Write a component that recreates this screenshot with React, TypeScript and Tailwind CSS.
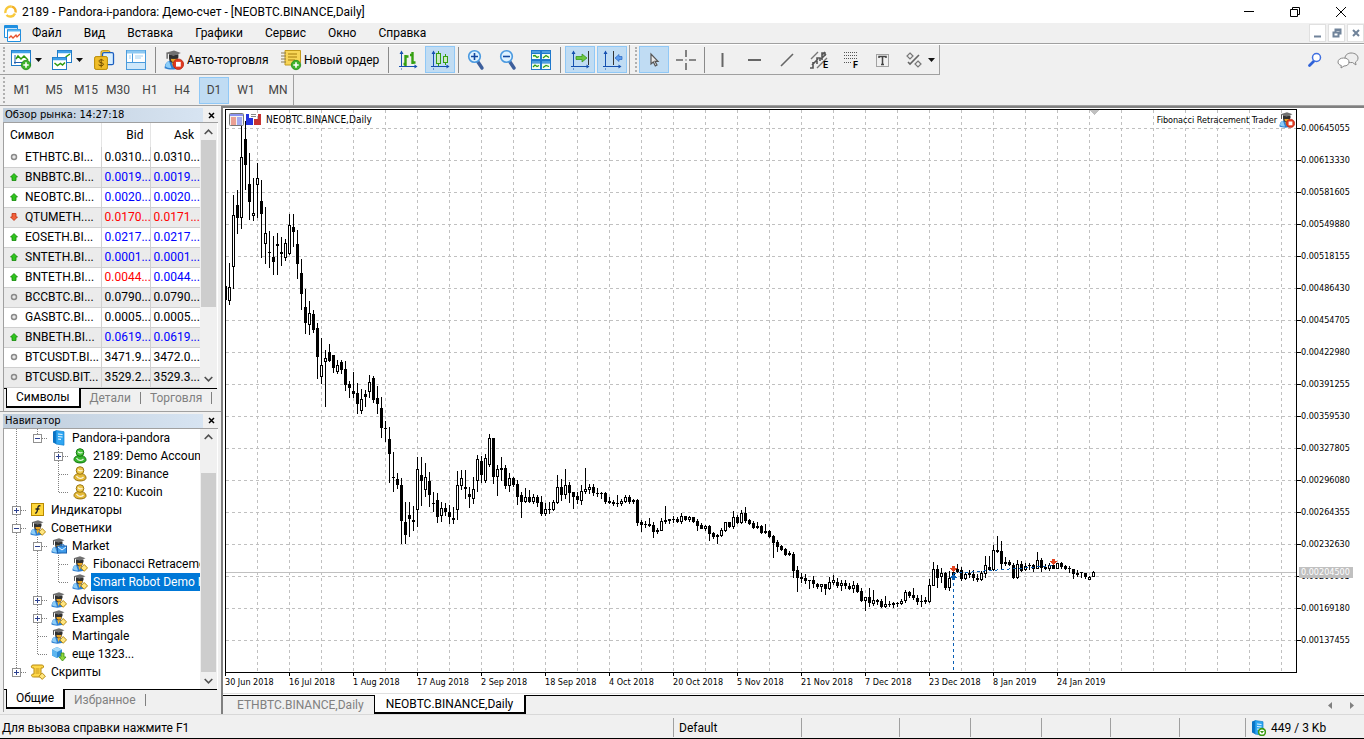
import React from "react";
import clsx from "clsx";

// [high, low, body top, body bottom, hollow]
type Candle = [number, number, number, number, number];

const candles: Candle[] = [
  [286, 300, 286, 300, 0], [263, 305, 287, 301, 1], [195, 289, 215, 267, 1], [190, 234, 205, 218, 0],
  [125, 229, 157, 218, 1], [121, 190, 139, 165, 0], [153, 220, 184, 202, 0], [178, 221, 213, 216, 1],
  [163, 218, 178, 185, 1], [180, 258, 201, 214, 0], [207, 264, 233, 244, 1], [231, 268, 252, 253, 0],
  [236, 275, 257, 262, 0], [233, 275, 244, 246, 0], [237, 266, 252, 254, 0], [239, 261, 243, 258, 1],
  [214, 255, 225, 254, 1], [214, 247, 227, 232, 0], [230, 279, 244, 264, 0], [259, 310, 273, 294, 0],
  [289, 334, 307, 323, 0], [301, 335, 313, 325, 1], [310, 333, 314, 330, 0], [323, 379, 328, 357, 0],
  [338, 384, 365, 377, 1], [350, 407, 358, 362, 1], [344, 362, 352, 361, 0], [355, 373, 355, 368, 0],
  [360, 374, 365, 372, 1], [360, 374, 362, 370, 0], [361, 391, 369, 385, 0], [381, 398, 384, 388, 0],
  [372, 398, 391, 394, 0], [383, 414, 393, 404, 0], [389, 414, 399, 411, 1], [390, 407, 394, 397, 0],
  [375, 398, 382, 392, 1], [376, 403, 378, 400, 0], [386, 414, 398, 404, 0], [397, 438, 408, 428, 0],
  [421, 442, 428, 429, 0], [427, 483, 439, 454, 0], [452, 492, 477, 478, 0], [473, 489, 479, 485, 0],
  [478, 544, 485, 521, 0], [502, 544, 522, 535, 0], [502, 537, 515, 519, 0], [506, 531, 520, 522, 0],
  [457, 527, 469, 510, 1], [457, 506, 475, 481, 0], [463, 497, 477, 490, 1], [472, 507, 481, 495, 0],
  [492, 512, 503, 504, 0], [493, 523, 500, 517, 0], [502, 522, 508, 516, 1], [503, 516, 508, 512, 0],
  [505, 524, 512, 517, 0], [507, 524, 518, 520, 0], [471, 520, 485, 510, 1], [470, 490, 478, 486, 1],
  [470, 499, 487, 489, 0], [487, 508, 494, 497, 0], [477, 504, 489, 499, 1], [455, 492, 459, 481, 1],
  [456, 483, 461, 475, 0], [454, 483, 458, 481, 1], [434, 467, 438, 465, 1], [438, 484, 438, 477, 0],
  [465, 496, 469, 477, 1], [457, 481, 468, 470, 0], [465, 489, 468, 486, 0], [473, 492, 478, 486, 1],
  [477, 487, 478, 485, 0], [480, 505, 484, 497, 0], [492, 518, 495, 502, 0], [488, 503, 497, 502, 1],
  [490, 503, 497, 502, 0], [494, 504, 497, 502, 1], [495, 507, 497, 503, 0], [496, 516, 502, 514, 0],
  [503, 516, 509, 514, 1], [502, 514, 509, 510, 0], [500, 511, 502, 510, 1], [475, 504, 487, 503, 1],
  [479, 501, 487, 495, 0], [469, 499, 485, 495, 1], [482, 503, 485, 493, 0], [492, 509, 492, 497, 0],
  [492, 504, 496, 500, 0], [485, 505, 491, 501, 1], [468, 494, 489, 492, 1], [484, 494, 487, 490, 1],
  [484, 496, 487, 493, 0], [488, 497, 493, 494, 0], [492, 499, 493, 494, 0], [492, 504, 493, 502, 0],
  [497, 504, 501, 503, 0], [500, 506, 502, 504, 0], [495, 507, 503, 504, 0], [499, 506, 501, 504, 1],
  [495, 503, 497, 502, 1], [495, 504, 497, 502, 0], [499, 504, 500, 502, 0], [499, 526, 500, 523, 0],
  [520, 532, 522, 525, 0], [521, 528, 524, 525, 0], [518, 527, 524, 526, 0], [522, 538, 525, 532, 0],
  [528, 534, 530, 532, 0], [518, 531, 521, 531, 1], [506, 524, 520, 522, 0], [519, 524, 519, 521, 0],
  [516, 523, 519, 520, 0], [517, 523, 519, 522, 0], [513, 524, 516, 522, 1], [516, 521, 516, 520, 0],
  [516, 522, 517, 520, 1], [517, 523, 517, 522, 0], [519, 531, 521, 526, 0], [523, 529, 525, 529, 0],
  [525, 531, 526, 529, 1], [525, 541, 526, 534, 0], [532, 539, 533, 537, 0], [534, 544, 535, 537, 0],
  [528, 537, 530, 536, 1], [522, 532, 522, 531, 1], [522, 528, 522, 527, 0], [511, 529, 517, 527, 1],
  [515, 524, 517, 523, 0], [510, 524, 513, 523, 1], [507, 523, 513, 521, 0], [519, 525, 520, 524, 0],
  [521, 529, 523, 528, 0], [522, 529, 526, 528, 0], [525, 534, 526, 533, 0], [524, 534, 531, 533, 0],
  [530, 538, 531, 537, 0], [535, 558, 536, 543, 0], [540, 552, 542, 547, 0], [545, 551, 546, 550, 0],
  [548, 556, 549, 555, 0], [551, 556, 553, 555, 0], [552, 578, 554, 571, 0], [566, 592, 570, 578, 0],
  [573, 583, 577, 579, 0], [574, 584, 578, 581, 0], [580, 589, 580, 581, 0], [576, 588, 580, 584, 0],
  [583, 589, 584, 587, 0], [584, 592, 584, 587, 1], [584, 595, 584, 589, 0], [577, 590, 582, 589, 1],
  [575, 585, 580, 583, 1], [578, 588, 582, 586, 0], [580, 591, 583, 586, 1], [580, 589, 583, 586, 0],
  [583, 590, 586, 589, 0], [581, 593, 585, 589, 1], [583, 593, 585, 592, 0], [588, 602, 591, 601, 0],
  [597, 611, 597, 601, 1], [588, 607, 597, 603, 0], [590, 606, 600, 604, 1], [599, 605, 600, 602, 0],
  [599, 608, 601, 607, 0], [596, 608, 604, 607, 1], [601, 607, 604, 605, 0], [602, 608, 603, 605, 0],
  [602, 607, 603, 604, 0], [599, 605, 601, 604, 1], [590, 603, 592, 601, 1], [591, 598, 592, 596, 0],
  [588, 600, 595, 598, 0], [595, 605, 598, 602, 0], [595, 607, 601, 602, 0], [597, 604, 600, 602, 0],
  [579, 603, 585, 602, 1], [562, 586, 569, 586, 1], [565, 588, 569, 578, 0], [568, 583, 573, 577, 1],
  [572, 590, 573, 588, 0], [571, 591, 578, 588, 1], [571, 580, 572, 575, 0], [564, 573, 569, 572, 0],
  [567, 581, 570, 579, 0], [572, 580, 574, 579, 1], [570, 578, 573, 575, 0], [570, 581, 574, 578, 0],
  [574, 582, 578, 580, 0], [571, 581, 573, 580, 1], [556, 578, 565, 574, 1], [556, 571, 567, 570, 0],
  [545, 571, 550, 570, 1], [536, 553, 550, 552, 0], [541, 569, 551, 564, 0], [557, 566, 562, 564, 0],
  [560, 566, 562, 565, 0], [563, 579, 565, 578, 0], [560, 579, 564, 578, 1], [561, 572, 564, 571, 0],
  [563, 571, 566, 570, 1], [563, 570, 565, 566, 0], [564, 572, 565, 569, 0], [552, 569, 560, 569, 1],
  [558, 572, 560, 568, 0], [564, 570, 567, 569, 0], [563, 571, 565, 569, 1], [564, 569, 565, 569, 0],
  [563, 569, 563, 569, 1], [562, 569, 563, 567, 0], [565, 570, 566, 569, 0], [566, 573, 568, 569, 0],
  [569, 579, 569, 574, 0], [570, 577, 573, 575, 0], [572, 578, 572, 573, 0], [573, 579, 573, 577, 0],
  [576, 580, 577, 580, 1], [571, 577, 572, 577, 1],
];

const prices = [
  "0.00645055", "0.00613330", "0.00581605", "0.00549880", "0.00518155", "0.00486430",
  "0.00454705", "0.00422980", "0.00391255", "0.00359530", "0.00327805", "0.00296080",
  "0.00264355", "0.00232630", "0.00200905", "0.00169180", "0.00137455",
];

const dates = [
  "30 Jun 2018", "16 Jul 2018", "1 Aug 2018", "17 Aug 2018", "2 Sep 2018", "18 Sep 2018", "4 Oct 2018",
  "20 Oct 2018", "5 Nov 2018", "21 Nov 2018", "7 Dec 2018", "23 Dec 2018", "8 Jan 2019", "24 Jan 2019",
];

type Dir = "up" | "down" | "flat";
const quotes: { symbol: string; bid: string; ask: string; dir: Dir; bidUp?: boolean }[] = [
  { symbol: "ETHBTC.BI...", bid: "0.0310...", ask: "0.0310...", dir: "flat" },
  { symbol: "BNBBTC.BI...", bid: "0.0019...", ask: "0.0019...", dir: "up" },
  { symbol: "NEOBTC.BI...", bid: "0.0020...", ask: "0.0020...", dir: "up" },
  { symbol: "QTUMETH....", bid: "0.0170...", ask: "0.0171...", dir: "down" },
  { symbol: "EOSETH.BI...", bid: "0.0217...", ask: "0.0217...", dir: "up" },
  { symbol: "SNTETH.BI...", bid: "0.0001...", ask: "0.0001...", dir: "up" },
  { symbol: "BNTETH.BI...", bid: "0.0044...", ask: "0.0044...", dir: "up", bidUp: false },
  { symbol: "BCCBTC.BI...", bid: "0.0790...", ask: "0.0790...", dir: "flat" },
  { symbol: "GASBTC.BI...", bid: "0.0005...", ask: "0.0005...", dir: "flat" },
  { symbol: "BNBETH.BI...", bid: "0.0619...", ask: "0.0619...", dir: "up" },
  { symbol: "BTCUSDT.BI...", bid: "3471.9...", ask: "3472.0...", dir: "flat" },
  { symbol: "BTCUSD.BIT...", bid: "3529.2...", ask: "3529.3...", dir: "flat" },
];

const dirColor: Record<Dir, string> = {
  up: "text-[#0000ff]",
  down: "text-[#ff0000]",
  flat: "text-black",
};

// cells: "|" line, "T" branch, "L" last branch, "+"/"-" box, "p"/"m" box on the last branch
const tree: { cells: string; icon: string; label: string; selected?: boolean }[] = [
  { cells: "|m", icon: "server", label: "Pandora-i-pandora" },
  { cells: "| +", icon: "userGreen", label: "2189: Demo Account" },
  { cells: "| T", icon: "userGold", label: "2209: Binance" },
  { cells: "| L", icon: "userGold", label: "2210: Kucoin" },
  { cells: "+", icon: "indicator", label: "Индикаторы" },
  { cells: "-", icon: "expert", label: "Советники" },
  { cells: "|-", icon: "market", label: "Market" },
  { cells: "||T", icon: "expert", label: "Fibonacci Retracement" },
  { cells: "||L", icon: "expert", label: "Smart Robot Demo M", selected: true },
  { cells: "|+", icon: "expert", label: "Advisors" },
  { cells: "|+", icon: "expert", label: "Examples" },
  { cells: "|T", icon: "expert", label: "Martingale" },
  { cells: "|L", icon: "more", label: "еще 1323..." },
  { cells: "p", icon: "script", label: "Скрипты" },
];

const Expert = ({ badge = "diamond", size = 16 }: { badge?: string; size?: number }) => (
  <svg width={size} height={size} viewBox="0 0 16 16" aria-hidden="true">
    <path d="M.5 14.500c0-4 2-6 5.500-6s5.500 2 6 6c-3 1.500-8.500 1.500-11.500 0z" fill="#2f7fd0" />
    <path d="M1 13c.3-2.500 1.500-3.800 3-4l2 5.500c-2 0-4.300-.4-5-1.500z" fill="#8ccdf8" />
    <path d="M6 9l1.500 5L10 9z" fill="#f4b52c" />
    <path d="M4 3.500h7v3.200c0 2.300-1.500 3.500-3.500 3.500S4 9 4 6.700z" fill="#3a3a3a" />
    <path d="M5.500 7h5c0 1.800-1 2.700-2.500 2.700S5.500 8.800 5.500 7z" fill="#e9a423" />
    <path d="M1.500 2.200L8 .3l5.500 2L7.500 4.700z" fill="#707070" />
    <path d="M4 3.600l3.500 1.300 4-1.500v2.800c-2 1-5.500 1-7.500 0z" fill="#303030" />
    <path d="M2.500 2.400v4.500" stroke="#555" strokeWidth="1" />
    {badge === "diamond" && (
      <path d="M12.200 8.500l3.300 3.400-3.300 3.400-3.300-3.400z" fill="#ffe680" stroke="#b78a10" strokeWidth="1" />
    )}
    {badge === "stop" && (
      <>
        <circle cx="11.500" cy="11.400" r="4.200" fill="#e03a20" stroke="#b32010" strokeWidth=".6" />
        <rect x="9.600" y="9.500" width="3.800" height="3.800" fill="#fff" />
      </>
    )}
    {badge === "case" && (
      <>
        <path d="M9 8V6.800h4V8" fill="none" stroke="#1f6fc0" />
        <rect x="6.500" y="8" width="9" height="7" fill="#3f9bea" stroke="#1b60ad" />
        <path d="M7 9l4 3 4-3" fill="none" stroke="#e8f5ff" />
      </>
    )}
  </svg>
);

const Coin = ({ green }: { green?: boolean }) => (
  <svg width="16" height="16" viewBox="0 0 16 16" aria-hidden="true">
    <path
      d="M2 11.500C2 9 4.500 7.500 8 7.500s6 1.500 6 4.500c0 4-12 4-12-.5z"
      fill={green ? "#37b52c" : "#e3b935"}
      stroke={green ? "#12780f" : "#9b7410"}
    />
    <circle cx="8" cy="4.500" r="3.800" fill={green ? "#48c53a" : "#eec94c"} stroke={green ? "#12780f" : "#9b7410"} />
    <path d="M6 3.500c1 2 3 1.500 4.500 1M4.500 10c2 3 5 3 7 1" stroke="#fff" strokeWidth="1.300" fill="none" opacity=".85" />
  </svg>
);

const Server = ({ ok }: { ok?: boolean }) => (
  <svg width="16" height="16" viewBox="0 0 16 16" aria-hidden="true">
    <path d="M2 1.500L5 .5v13.500l-3-1.500z" fill="#0a72c4" />
    <path d="M5 .5l8 1.200v13.500L5 14z" fill="#2fa6f2" stroke="#0f7fd0" strokeWidth=".7" />
    <path d="M7 4l4.500.5M7 6.500l4.500.5M7 9l3 .4" stroke="#e5f6ff" strokeWidth="1.200" />
    {ok && (
      <>
        <circle cx="12" cy="12" r="3.400" fill="#fff" stroke="#3a9a10" strokeWidth="1.600" />
        <path d="M10 11h4l-2 2.500z" fill="#3a9a10" />
      </>
    )}
  </svg>
);

const TreeIcon = ({ name }: { name: string }) => {
  if (name === "server") return <Server />;
  if (name === "userGreen") return <Coin green />;
  if (name === "userGold") return <Coin />;
  if (name === "expert") return <Expert />;
  if (name === "market") return <Expert badge="case" />;
  if (name === "indicator")
    return (
      <svg width="16" height="16" viewBox="0 0 16 16" aria-hidden="true">
        <rect x="1.500" y="1.500" width="12" height="12" fill="#ffd83d" stroke="#b98a00" />
        <path d="M10.500 4c-2-.8-2.500.5-2.800 2.500S7 11.500 5 11.200M5.500 7h4" stroke="#222" strokeWidth="1.300" fill="none" />
      </svg>
    );
  if (name === "more")
    return (
      <svg width="16" height="16" viewBox="0 0 16 16" aria-hidden="true">
        <path d="M1 3.500L6 1l5 2.500v6L6 12 1 9.500z" fill="#2c8ad4" />
        <path d="M1 3.500L6 1l5 2.500L6 6z" fill="#a9dcfb" />
        <path d="M1 3.500L6 6v6L1 9.500z" fill="#5cb5ef" />
        <path d="M10 7h3v4h2l-3.500 4L8 11h2z" fill="#8fd63c" stroke="#3a8f14" strokeWidth=".8" />
      </svg>
    );
  return (
    <svg width="16" height="16" viewBox="0 0 16 16" aria-hidden="true">
      <path d="M3 1h9c2 0 2 3 .5 3H11v9H3.500C1 13 1 10 3 10h1V4H2.500C.8 4 1 1 3 1z" fill="#ffd84a" stroke="#b78a10" />
      <path d="M5.500 5h4M5.500 7h4M5.500 9h4" stroke="#c8951a" />
      <path d="M12.200 9l3.200 3.200-3.200 3.200L9 12.200z" fill="#ffe680" stroke="#b78a10" />
    </svg>
  );
};

const TreeCell = ({ kind }: { kind: string }) => {
  const box = "+-pm".includes(kind);
  const down = "|T+-".includes(kind);
  const dots = { stroke: "#808080", strokeDasharray: "1 1" };
  return (
    <svg width="21" height="18" className="shrink-0" shapeRendering="crispEdges" aria-hidden="true">
      {kind !== " " && <path d={down ? "M10.500 0v18" : "M10.500 0v9"} {...dots} />}
      {kind !== " " && kind !== "|" && <path d="M11 9.500h10" {...dots} />}
      {box && (
        <>
          <rect x="6.500" y="5.500" width="8" height="8" fill="#fff" stroke="#919191" />
          <path d={kind === "+" || kind === "p" ? "M8 9.500h5M10.500 7v5" : "M8 9.500h5"} stroke="#2b3f8f" />
        </>
      )}
    </svg>
  );
};

const Arrow = ({ dir }: { dir: Dir }) => {
  if (dir === "flat")
    return (
      <svg width="8" height="8" aria-hidden="true">
        <circle cx="4" cy="4" r="2.500" fill="#e8e8e8" stroke="#8a8a8a" strokeWidth="1.500" />
      </svg>
    );
  return (
    <svg width="8" height="8" aria-hidden="true">
      {dir === "up" ? (
        <path d="M4 .5L7.500 4H6v3.500H2V4H.5z" fill="#2fc41c" stroke="#138a08" strokeWidth=".8" />
      ) : (
        <path d="M4 7.500L.5 4H2V.5h4V4h1.500z" fill="#f2603a" stroke="#c03010" strokeWidth=".8" />
      )}
    </svg>
  );
};

const Caret = () => (
  <svg width="7" height="4" aria-hidden="true">
    <path d="M0 0h7L3.500 4z" fill="#111" />
  </svg>
);

const Icon = ({ children }: { children: React.ReactNode }) => (
  <svg width="20" height="20" viewBox="0 0 20 20" fill="none" className="shrink-0 overflow-visible" aria-hidden="true">
    {children}
  </svg>
);

const Axes = () => (
  <g fill="#1550b0" stroke="#1550b0">
    <path d="M3.500 3v14M1 16.500h17" />
    <path d="M1.500 4L3.500.5 5.500 4zM16.500 14.500l3 2-3 2z" stroke="none" />
    <path d="M3.500 18.500v1" />
  </g>
);

const Plus = () => (
  <>
    <circle cx="15" cy="15" r="4.700" fill="#3fb32e" stroke="#1f8a14" strokeWidth=".8" />
    <path d="M12.300 15h5.400M15 12.300v5.400" stroke="#fff" strokeWidth="1.600" />
  </>
);

const icons = {
  newChart: (
    <Icon>
      <rect x=".5" y=".5" width="19" height="15" fill="#fff" stroke="#1f7bc8" />
      <path d="M1 2h18" stroke="#3fa0e8" strokeWidth="2.500" />
      <path d="M4 5v9M3 12.500h13" stroke="#1f60b0" />
      <path d="M5 9l2-3 3 3 3-3 4 4" stroke="#2e9a10" strokeWidth="1.500" />
      <Plus />
    </Icon>
  ),
  profiles: (
    <Icon>
      <rect x="5.500" y=".5" width="14" height="12" fill="#fff" stroke="#1f7bc8" />
      <path d="M6 2h13" stroke="#3fa0e8" strokeWidth="2.500" />
      <path d="M13 8l2-2 3-2" stroke="#2e9a10" strokeWidth="1.500" />
      <rect x=".5" y="7.500" width="14" height="12" fill="#fff" stroke="#1f7bc8" />
      <path d="M1 9h13" stroke="#3fa0e8" strokeWidth="2.500" />
      <path d="M2.500 13l3 2.500 3-2 2 1.500 2.500-2.500" stroke="#2e9a10" strokeWidth="1.500" />
    </Icon>
  ),
  symbols: (
    <Icon>
      <rect x="7" y=".7" width="9" height="7" rx="1.500" fill="#f6d35a" stroke="#b98a00" />
      <rect x="8.500" y="2.700" width="11" height="12" rx="1.500" fill="#d8efff" stroke="#1c5fc0" strokeWidth="1.300" />
      <rect x=".6" y="6.600" width="12.800" height="12.800" rx="1.500" fill="#f0bd28" stroke="#b98a00" />
      <path d="M9.500 10.500c-1.500-1.200-5-.8-4.500 1 .4 1.500 4.200.8 4.500 2.700.2 1.700-3.300 2-5 .6M7.200 8.800v8.700" stroke="#6f4c00" />
    </Icon>
  ),
  panels: (
    <Icon>
      <rect x=".5" y=".5" width="19" height="19" fill="#fff" stroke="#4a9bdc" />
      <path d="M1 2h18" stroke="#8cc8f2" strokeWidth="3" />
      <rect x="1" y="13" width="18" height="6" fill="#cfe8fa" />
      <path d="M6.500 3.500v9M1 12.500h18" stroke="#4a9bdc" />
      <path d="M3 6h2M3 8h2M9 6h8M9 8h6" stroke="#9fd0f2" />
    </Icon>
  ),
  order: (
    <Icon>
      <path d="M4 .5h15.500v12L17 15H4z" fill="#f8d556" stroke="#c29a1c" />
      <path d="M7 4h9M7 7h9M7 10h7" stroke="#a57c0c" />
      <path d="M0 3h5M0 6h5M0 9h5M0 12h5" stroke="#8a7a50" />
      <Plus />
    </Icon>
  ),
  bars: (
    <Icon>
      <Axes />
      <path d="M7.500 5v11M5.500 14h2M7.500 6.500h3M14.500 2v12M12 5h2.500M14.500 12.500h3" stroke="#35a011" strokeWidth="2.400" />
    </Icon>
  ),
  candles: (
    <Icon>
      <Axes />
      <path d="M8.500 1v15M15.500 4v11" stroke="#35a011" />
      <rect x="6.500" y="3.500" width="4" height="10" fill="#cdebc0" stroke="#35a011" />
      <rect x="13.500" y="6.500" width="4" height="6" fill="#cdebc0" stroke="#35a011" />
    </Icon>
  ),
  zoomIn: (
    <Icon>
      <path d="M11 12l4 6" stroke="#3d5f9c" strokeWidth="3.400" strokeLinecap="round" />
      <circle cx="7.500" cy="6.500" r="5.800" fill="#dff2ff" stroke="#4b9ae0" strokeWidth="1.600" />
      <path d="M4 6.500h7M7.500 3v7" stroke="#1348a0" strokeWidth="1.600" />
    </Icon>
  ),
  zoomOut: (
    <Icon>
      <path d="M11 12l4 6" stroke="#3d5f9c" strokeWidth="3.400" strokeLinecap="round" />
      <circle cx="7.500" cy="6.500" r="5.800" fill="#dff2ff" stroke="#4b9ae0" strokeWidth="1.600" />
      <path d="M4 6.500h7" stroke="#1348a0" strokeWidth="1.600" />
    </Icon>
  ),
  tile: (
    <Icon>
      <rect x="0" y="0" width="20" height="20" fill="#1f78cc" />
      <path d="M1 2h8M11 2h8M1 12h8M11 12h8" stroke="#7cc4f5" strokeWidth="1" />
      <path d="M1 4h8v5H1zM11 4h8v5h-8zM1 13.500h8V19H1zM11 13.500h8V19h-8z" fill="#f4fff0" />
      <path d="M2 6l2-.5 2 2 2-1M12 8l3-2.500 3 2M2 17l2-2 2 1.500 2-1M12 17.500l3-2 3 1" stroke="#2e9a10" strokeWidth="1.300" />
    </Icon>
  ),
  autoScroll: (
    <Icon>
      <Axes />
      <path d="M18.500 1v14" stroke="#333" />
      <path d="M6 6.500h6V4l5 4-5 4V9.500H6z" fill="#6cc840" stroke="#2f8f12" strokeWidth=".7" />
    </Icon>
  ),
  shift: (
    <Icon>
      <Axes />
      <path d="M11.500 1v14" stroke="#333" />
      <path d="M20 6.500h-3V4.500L13 8l4 3.500v-2h3z" fill="#5b9bee" stroke="#2a64c0" strokeWidth=".7" />
    </Icon>
  ),
  cursor: (
    <Icon>
      <path d="M7 4v10l2.300-2 2 4 1.700-1-2-3.700h3z" fill="#e8e8e8" stroke="#555" strokeWidth="1.200" />
    </Icon>
  ),
  cross: (
    <Icon>
      <path d="M10 0v7M10 13v7M0 10h7M13 10h7M9.500 10h1" stroke="#666" strokeWidth="1.600" />
    </Icon>
  ),
  vline: (
    <Icon>
      <path d="M9.500 3v14" stroke="#666" strokeWidth="2" />
    </Icon>
  ),
  hline: (
    <Icon>
      <path d="M3 10h13" stroke="#666" strokeWidth="2" />
    </Icon>
  ),
  trend: (
    <Icon>
      <path d="M4 16L16 4" stroke="#666" strokeWidth="1.600" />
    </Icon>
  ),
  channel: (
    <Icon>
      <path d="M2 9l7-7M8 18L18 8" stroke="#777" strokeWidth="1.400" />
      <path d="M1 18h3v-6M3 15l6-6M8 14V8h3v3M13 10V3h3v3M13 5l3-3M12 9l5-5" stroke="#555" strokeWidth="1.600" />
      <text x="14" y="18" fill="#000" fontSize="9" fontWeight="700" stroke="none">E</text>
    </Icon>
  ),
  fibo: (
    <Icon>
      <path d="M3 2.500h14M3 5.500h14M3 8.500h14M3 12.500h8" stroke="#555" strokeDasharray="1 1" />
      <text x="12" y="18" fill="#000" fontSize="9" fontWeight="700" stroke="none">F</text>
    </Icon>
  ),
  label: (
    <Icon>
      <rect x="3.500" y="4.500" width="12" height="12" stroke="#555" strokeDasharray="1 1" />
      <path d="M6 8V6.500h7V8M9.500 6.500v8M8 14.500h3" stroke="#444" strokeWidth="1.500" />
    </Icon>
  ),
  shapes: (
    <Icon>
      <path d="M6 3l3 3-3 3-3-3zM14 11l3 3-3 3-3-3z" stroke="#777" strokeWidth="1.200" />
      <path d="M4 12l2 2 9-9" stroke="#666" strokeWidth="1.600" />
    </Icon>
  ),
};

interface ToolProps {
  icon: keyof typeof icons;
  title: string;
  active?: boolean;
  menu?: boolean;
}

const Tool: React.FC<ToolProps> = ({ icon, title, active, menu }) => (
  <button
    title={title}
    aria-label={title}
    className={clsx(
      "h-[27px] shrink-0 flex items-center justify-center border",
      menu ? "w-[39px] gap-1" : "w-[30px]",
      active ? "bg-[#c0dcf3] border-[#90c8f6]" : "border-transparent"
    )}
  >
    {icons[icon]}
    {menu && <Caret />}
  </button>
);

const Sep = ({ className }: { className: string }) => (
  <span className={clsx("w-px h-[26px] bg-[#8a8a8a] shrink-0", className)} />
);

const Grip = () => (
  <span className="w-[5px] shrink-0 self-stretch my-0.5 flex justify-end">
    <span className="w-0.5 border-l-2 border-dotted border-[#b0b0b0]" />
  </span>
);

const timeframes = ["M1", "M5", "M15", "M30", "H1", "H4", "D1", "W1", "MN"];
const menu = ["Файл", "Вид", "Вставка", "Графики", "Сервис", "Окно", "Справка"];

const PanelTitle = ({ text }: { text: string }) => (
  <div className="h-[14px] ml-[3px] flex items-center">
    <h2 className="w-[200px] h-[14px] pl-0.5 leading-[14px] text-[10px] font-['DejaVu_Sans',sans-serif] bg-linear-to-r from-[#bfcddb] to-[#d7e4f2]">
      {text}
    </h2>
    <button aria-label={`Закрыть: ${text}`} className="ml-[5px]">
      <svg width="7" height="7" aria-hidden="true">
        <path d="M1 1l5 5M6 1L1 6" stroke="#000" strokeWidth="1.500" />
      </svg>
    </button>
  </div>
);

const ScrollBar = ({ children }: { children: React.ReactNode }) => (
  <div className="w-[17px] shrink-0 bg-[#f0f0f0] flex flex-col">
    <button aria-label="Вверх" className="h-[17px] shrink-0 flex items-center justify-center">
      <svg width="9" height="6" aria-hidden="true">
        <path d="M.7 5L4.500 1.200 8.300 5" fill="none" stroke="#505050" strokeWidth="1.600" />
      </svg>
    </button>
    <div className="flex-1 flex flex-col px-px">{children}</div>
    <button aria-label="Вниз" className="h-[17px] shrink-0 flex items-center justify-center">
      <svg width="9" height="6" aria-hidden="true">
        <path d="M.7 1L4.500 4.800 8.300 1" fill="none" stroke="#505050" strokeWidth="1.600" />
      </svg>
    </button>
  </div>
);

const PanelTabs = ({ tabs }: { tabs: string[] }) => (
  <div className="flex h-[23px] ml-[3px] border-l border-[#a0a0a0]">
    <span className="w-0.5 border-t border-black" />
    {tabs.map((tab, i) =>
      i === 0 ? (
        <button key={tab} className="h-5 px-[9px] bg-white border-l border-r-2 border-b-2 border-black">
          {tab}
        </button>
      ) : (
        <span key={tab} className="h-5 border-t border-black flex items-center">
          <button className="px-[9px] text-[#808080]">{tab}</button>
          <span className="w-px h-3 bg-[#808080]" />
        </span>
      )
    )}
    <span className="flex-1 border-t border-black mr-[4px]" />
  </div>
);

const MarketWatch = () => (
  <section className="pt-0.5 border-b border-[#a0a0a0]">
    <PanelTitle text="Обзор рынка: 14:27:18" />
    <div className="flex ml-[3px] mr-[3px] border-l border-t border-[#a0a0a0] bg-white">
      <table className="table-fixed w-[196px] border-collapse">
        <thead>
          <tr className="h-6">
            <th className="w-[97px] pl-1.5 text-left font-normal">Символ</th>
            <th className="w-[49px] pr-[6px] text-right font-normal border-l border-[#e5e5e5]">Bid</th>
            <th className="w-[50px] pr-[6px] text-right font-normal border-l border-[#e5e5e5]">Ask</th>
          </tr>
        </thead>
        <tbody>
          {quotes.map((q, i) => (
            <tr
              key={q.symbol}
              className={clsx("h-5 border-b border-[#d0d0d0]", i % 2 === 1 && "bg-[#ebebeb]")}
            >
              <td className="p-0">
                <div className="flex items-center gap-[7px] pl-1.5 leading-[18px] whitespace-nowrap">
                  <Arrow dir={q.dir} />
                  {q.symbol}
                </div>
              </td>
              <td
                className={clsx(
                  "p-0 pl-[3px] leading-[18px] whitespace-nowrap border-l border-[#d0d0d0]",
                  q.bidUp === false ? "text-[#ff0000]" : dirColor[q.dir]
                )}
              >
                {q.bid}
              </td>
              <td className={clsx("p-0 pl-[3px] leading-[18px] whitespace-nowrap border-l border-[#d0d0d0]", dirColor[q.dir])}>
                {q.ask}
              </td>
            </tr>
          ))}
        </tbody>
      </table>
      <ScrollBar>
        <span className="h-[167px] bg-[#cdcdcd]" />
      </ScrollBar>
    </div>
    <PanelTabs tabs={["Символы", "Детали", "Торговля"]} />
  </section>
);

const Navigator = () => (
  <section className="flex-1 min-h-0 flex flex-col pt-0.5 pb-0.5">
    <PanelTitle text="Навигатор" />
    <div className="flex-1 min-h-0 flex mx-[3px] border-l border-t border-[#a0a0a0] bg-white">
      <ul className="w-[196px] overflow-hidden pl-0.5">
        {tree.map((row) => (
          <li key={row.label} className="h-[18px] flex items-center whitespace-nowrap">
            {row.cells.split("").map((kind, i) => (
              <TreeCell key={i} kind={kind} />
            ))}
            <span className="w-[21px] shrink-0 flex justify-center">
              <TreeIcon name={row.icon} />
            </span>
            <span className={clsx("ml-px pl-0.5 leading-[18px]", row.selected && "bg-[#0078d7] text-white flex-1")}>
              {row.label}
            </span>
          </li>
        ))}
      </ul>
      <ScrollBar>
        <span className="h-[27px]" />
        <span className="flex-1 bg-[#cdcdcd]" />
      </ScrollBar>
    </div>
    <PanelTabs tabs={["Общие", "Избранное"]} />
  </section>
);

// the plot starts at 226,110 inside its border
const Plot = () => (
  <svg className="block w-full h-full" shapeRendering="crispEdges" role="img" aria-label="NEOBTC.BINANCE, Daily">
    <g stroke="#c0c0c0" strokeDasharray="3 3">
      {Array.from({ length: 60 }, (_, i) => (
        <line key={i} x1={31.5 + i * 32} x2={31.5 + i * 32} y1="0" y2="100%" />
      ))}
      {prices.map((p, i) => (
        <line key={p} x1="0" x2="100%" y1={18.5 + i * 32} y2={18.5 + i * 32} />
      ))}
    </g>
    <line x1="0" x2="100%" y1="462.5" y2="462.5" stroke="#c0c0c0" />
    <g transform="translate(-226 -110)">
      <path d="M1089 110h10l-5 5z" fill="#c0c0c0" />
      {candles.map(([high, low, top, bottom, hollow], i) => {
        const x = 225 + i * 4;
        return (
          <g key={i}>
            <rect x={x} y={high} width="1" height={low - high} />
            <rect x={x - 1} y={top} width="3" height={bottom - top} />
            {hollow === 1 && <rect x={x} y={top + 1} width="1" height={bottom - top - 2} fill="#fff" />}
          </g>
        );
      })}
      <path d="M953.500 583v90M953 573.500L1053 565.500" stroke="#0a5fb4" strokeDasharray="3 3" fill="none" />
      <path d="M952 566h3v2h2l-3 4h-1l-3-4h2zM1052 559h3v2h2l-3 4h-1l-3-4h2z" fill="#e34420" />
      <path d="M953 574h1l3 4h-2v2h-3v-2h-2z" fill="#0a5fb4" />
    </g>
  </svg>
);

const Chart = () => (
  <div className="flex-1 min-h-0 flex flex-col bg-white pl-0.5 pt-px font-['DejaVu_Sans_Condensed','DejaVu_Sans',sans-serif]">
    <div className="flex-1 min-h-0 flex">
      <div className="relative flex-1 min-w-0 border border-black">
        <Plot />
        <div className="absolute left-[3px] top-[3px] flex items-center gap-[5px] text-[10px] leading-3">
          <svg width="32" height="13" aria-hidden="true">
            <rect x=".5" y=".5" width="14" height="12" rx="1" fill="#f2f2f2" stroke="#777" />
            <path d="M1 2h13" stroke="#8a92f0" strokeWidth="2" />
            <path d="M2 5h5M2 7h5M2 9h5M2 11h5" stroke="#e88474" strokeWidth="1.300" />
            <path d="M8 5h5M8 7h5M8 9h5M8 11h5" stroke="#8a92f0" strokeWidth="1.300" />
            <path d="M17 1h3v4h4v7h-7z" fill="#2434e0" />
            <path d="M25 6h4V1h3v11h-7z" fill="#c83232" />
            <path d="M22 1.500h5M22 3.500h5" stroke="#888" />
          </svg>
          NEOBTC.BINANCE,Daily
        </div>
        <div className="absolute right-px top-0.5 flex items-center gap-0.5 text-[9px] leading-4">
          Fibonacci Retracement Trader
          <Expert badge="stop" />
        </div>
      </div>
      <div className="relative w-[67px] shrink-0 pt-[3px] text-[9px]">
        {prices.map((p) => (
          <div key={p} className="h-8 flex items-center">
            <span className="w-1 h-px bg-black" />
            {p}
          </div>
        ))}
        <div className="absolute top-[458px] left-0.5 w-[54px] h-[11px] pl-0.5 bg-[#c0c0c0] text-white leading-[11px]">
          0.00204500
        </div>
      </div>
    </div>
    <div className="h-[20px] flex overflow-hidden text-[9px] leading-3 whitespace-nowrap">
      {dates.map((d) => (
        <div key={d} className="w-16 shrink-0">
          <span className="block w-px h-[3px] bg-black" />
          {d}
        </div>
      ))}
    </div>
  </div>
);

const StatusCell = ({ className, children }: { className: string; children?: React.ReactNode }) => (
  <div className={clsx("h-[19px] flex items-center border-l border-[#a0a0a0] shrink-0", className)}>{children}</div>
);

export default function App() {
  return (
    <div className="h-screen overflow-hidden flex flex-col bg-[#f0f0f0] text-black text-[12px] leading-4 font-['Roboto','Open_Sans',sans-serif]">
      <header className="h-[23px] shrink-0 bg-white flex items-center pl-1">
        <svg width="13" height="13" viewBox="0 0 13 13" fill="none" strokeWidth="2.400" aria-hidden="true">
          <path d="M1.500 8C.8 4 4 1 7.500 1.600" stroke="#f8c93c" />
          <path d="M7.500 1.600c3 .5 4.500 3 4 5.900" stroke="#f3b229" />
          <path d="M11 8.500C9.500 12 5 12.500 2.500 10" stroke="#f8c93c" />
        </svg>
        <h1 className="ml-[5px] flex-1">2189 - Pandora-i-pandora: Демо-счет - [NEOBTC.BINANCE,Daily]</h1>
        <div className="flex gap-[34px] pr-[17px]">
          <button aria-label="Свернуть">
            <svg width="12" height="12" stroke="#000" aria-hidden="true"><path d="M1 5.500h10" /></svg>
          </button>
          <button aria-label="Восстановить">
            <svg width="12" height="12" stroke="#000" fill="none" aria-hidden="true">
              <path d="M1.500 3.500h7v7h-7zM3.500 3V1.500h7v7H9" />
            </svg>
          </button>
          <button aria-label="Закрыть">
            <svg width="12" height="12" stroke="#000" aria-hidden="true"><path d="M1 1l10 10M11 1L1 11" /></svg>
          </button>
        </div>
      </header>

      <nav className="h-[21px] shrink-0 flex items-center pl-1 border-b border-[#a0a0a0]">
        <svg width="17" height="17" viewBox="0 0 17 17" fill="none" aria-hidden="true">
          <path d="M.5.5h13v12H.5z" fill="#fff" stroke="#1f8fe0" />
          <path d="M1 2h12" stroke="#1f8fe0" strokeWidth="2.500" />
          <path d="M3.500 4.500h13v12h-13z" fill="#fff" stroke="#1f8fe0" />
          <path d="M4 5.500h12" stroke="#5ab4f0" strokeWidth="2" />
          <path d="M5 13l2-2 2 2 3-3 1 2 3-3" stroke="#e8502a" strokeWidth="1.300" />
        </svg>
        <ul className="ml-[11px] flex gap-[22px]">
          {menu.map((item) => (
            <li key={item}>
              <button>{item}</button>
            </li>
          ))}
        </ul>
        <div className="ml-auto flex gap-0.5">
          {["M4 11.500h7", "M4.500 7.500h5v4h-5zM6.500 7V4.500h5v4H10M6.500 5h5", "M5 5l6 6M11 5l-6 6"].map((d) => (
            <button key={d} aria-label="Окно графика" className="bg-white border border-[#e0e0e0]">
              <svg width="15" height="16" fill="none" stroke="#70839a" strokeWidth="2" aria-hidden="true">
                <path d={d} />
              </svg>
            </button>
          ))}
        </div>
      </nav>

      <div className="shrink-0 flex items-start justify-between border-t border-white">
        <div className="h-[30px] flex items-center gap-0.5 border-r border-b border-[#a0a0a0]">
          <Grip />
          <Tool icon="newChart" title="Новый график" menu />
          <Tool icon="profiles" title="Профили" menu />
          <Tool icon="symbols" title="Символы" />
          <Tool icon="panels" title="Панели" />
          <Sep className="mx-0.5" />
          <button className="w-[115px] flex items-center gap-[3px] pl-1 whitespace-nowrap">
            <Expert badge="stop" size={20} />
            Авто-торговля
          </button>
          <button className="w-[107px] flex items-center gap-[3px] pl-1 whitespace-nowrap">
            {icons.order}
            Новый ордер
          </button>
          <Sep className="mx-0.5" />
          <Tool icon="bars" title="Бары" />
          <Tool icon="candles" title="Свечи" active />
          <Sep className="mx-px" />
          <Tool icon="zoomIn" title="Увеличить" />
          <Tool icon="zoomOut" title="Уменьшить" />
          <Tool icon="tile" title="Расположить окна" />
          <Sep className="mx-0.5" />
          <Tool icon="autoScroll" title="Автопрокрутка" active />
          <Tool icon="shift" title="Сдвиг графика" active />
          <span className="w-px self-stretch bg-[#a0a0a0]" />
          <Grip />
          <Tool icon="cursor" title="Курсор" active />
          <Tool icon="cross" title="Перекрестие" />
          <Sep className="mx-px" />
          <Tool icon="vline" title="Вертикальная линия" />
          <Tool icon="hline" title="Горизонтальная линия" />
          <Tool icon="trend" title="Трендовая линия" />
          <Tool icon="channel" title="Канал" />
          <Tool icon="fibo" title="Фибоначчи" />
          <Tool icon="label" title="Текст" />
          <Tool icon="shapes" title="Объекты" menu />
        </div>
        <div className="flex items-center gap-[14px] pr-1 h-[30px]">
          <button aria-label="Поиск">
            <svg width="16" height="16" fill="none" aria-hidden="true">
              <path d="M7 9l-4.500 4.500" stroke="#2f62d8" strokeWidth="2.800" strokeLinecap="round" />
              <circle cx="9.500" cy="5.500" r="4" fill="#fff" stroke="#3f6fe0" strokeWidth="1.500" />
            </svg>
          </button>
          <button aria-label="Сообщения">
            <svg width="23" height="18" fill="#eee" stroke="#888" aria-hidden="true">
              <path d="M14 2c4 0 7 2 7 5 0 2-1 3-2.500 4l.5 3-3.500-2.500C10 12 8 9.500 8 7c0-3 3-5 6-5z" />
              <path d="M6.500 7c3.500 0 5.500 1.500 5.500 4s-2 4-5 4l-3 2 .3-2.500C2 14 1 12.500 1 11c0-2.500 2.500-4 5.500-4z" fill="#fff" />
            </svg>
          </button>
        </div>
      </div>

      <div className="h-[31px] shrink-0 flex border-b border-[#a0a0a0]">
        <div className="flex items-center gap-0.5 border-r border-[#a0a0a0]">
          <Grip />
          {timeframes.map((tf) => (
            <button
              key={tf}
              className={clsx(
                "w-[30px] h-[27px] text-[#444] border",
                tf === "D1" ? "bg-[#c0dcf3] border-[#90c8f6]" : "border-transparent"
              )}
            >
              {tf}
            </button>
          ))}
        </div>
      </div>

      <main className="flex-1 min-h-0 flex">
        <aside className="w-[221px] shrink-0 flex flex-col">
          <MarketWatch />
          <Navigator />
        </aside>
        <div className="flex-1 min-w-0 flex flex-col border-l-2 border-t-2 border-[#808080]">
          <Chart />
          <div className="h-[21px] shrink-0 flex bg-white border-t border-[#e0e0e0] pt-px">
            <span className="w-[14px] bg-[#f0f0f0] border-t border-black" />
            <button className="w-[137px] bg-[#f0f0f0] text-left text-[#808080] border-t border-black">
              ETHBTC.BINANCE,Daily
            </button>
            <button className="w-[152px] bg-white border-l border-r-2 border-b-2 border-black">
              NEOBTC.BINANCE,Daily
            </button>
            <div className="flex-1 flex items-center justify-end gap-[18px] pr-[10px] bg-[#f0f0f0] border-t border-black">
              <button aria-label="Назад">
                <svg width="4" height="7" aria-hidden="true"><path d="M4 0v7L0 3.500z" fill="#808080" /></svg>
              </button>
              <button aria-label="Вперед">
                <svg width="4" height="7" aria-hidden="true"><path d="M0 0v7l4-3.500z" fill="#808080" /></svg>
              </button>
            </div>
          </div>
        </div>
      </main>

      <footer className="h-[25px] shrink-0 flex items-center pt-0.5 border-t border-t-[#d8d8d8] border-b border-b-black">
        <p className="flex-1 pl-0.5">Для вызова справки нажмите F1</p>
        <StatusCell className="w-32 pl-[5px]">Default</StatusCell>
        <StatusCell className="w-[98px]" />
        <StatusCell className="w-[71px]" />
        <StatusCell className="w-[71px]" />
        <StatusCell className="w-[69px]" />
        <StatusCell className="w-[69px]" />
        <StatusCell className="w-[66px]" />
        <StatusCell className="w-[119px] pl-1 gap-[5px]">
          <Server ok />
          449 / 3 Kb
        </StatusCell>
      </footer>
    </div>
  );
}
